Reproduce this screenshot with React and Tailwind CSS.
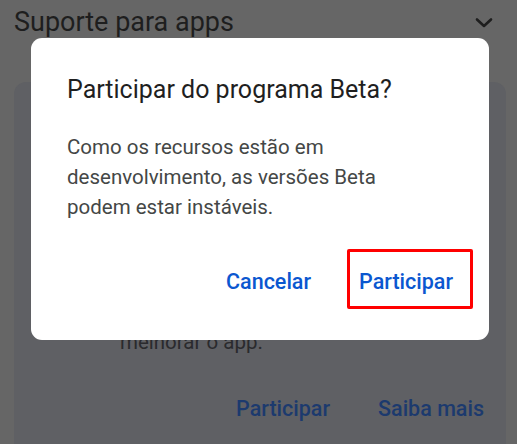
import React from "react";

export default function App() {
  const font = { fontFamily: "Roboto, 'Noto Sans', sans-serif" };
  return (
    <div className="relative w-[517px] h-[444px] overflow-hidden bg-[#666666]" style={font}>
      {/* Background page (dimmed) */}
      <div className="flex items-center justify-between h-[44px] pl-[14px] pr-[24px]">
        <span className="text-[27px] text-[#1e1e1e] leading-none">Suporte para apps</span>
        <svg width="18" height="12" viewBox="0 0 18 12" className="mt-[2px]">
          <path d="M2 2.5 L9 9 L16 2.5" fill="none" stroke="#1e1e1e" strokeWidth="2.6" strokeLinecap="round" strokeLinejoin="round" />
        </svg>
      </div>
      <div className="mt-[38px] mr-[11px] ml-[14px] h-[400px] rounded-t-[12px] bg-[#5f6064] flex flex-col">
        <div className="pl-[106px] pt-[215px] text-[20.5px] leading-[30px] text-[#2a2a2d]">
          <div>Participe do programa Beta e</div>
          <div>melhorar o app.</div>
        </div>
        <div className="flex justify-end gap-[48px] pr-[22px] mt-[36px] text-[21.5px] font-medium text-[#1c3a6e]">
          <span>Participar</span>
          <span>Saiba mais</span>
        </div>
      </div>

      {/* Dialog */}
      <div className="absolute left-[31px] top-[38px] w-[458px] h-[302px] bg-white rounded-[11px] flex flex-col pl-[36px] pr-[36px] pt-[37px]">
        <div className="text-[25px] leading-[30px] text-[#1f1f1f]">Participar do programa Beta?</div>
        <div className="mt-[27px] text-[20.5px] leading-[30px] text-[#444746]">
          Como os recursos estão em<br />desenvolvimento, as versões Beta<br />podem estar instáveis.
        </div>
        <div className="mt-[45px] flex justify-end gap-[48px] text-[21.5px] font-medium leading-[30px] text-[#0b57d0]">
          <span>Cancelar</span>
          <span>Participar</span>
        </div>
      </div>

      {/* Red highlight */}
      <div className="absolute left-[347px] top-[249px] w-[126px] h-[60px] border-[3px] border-[#ff0000] rounded-[2px]" />
    </div>
  );
}
